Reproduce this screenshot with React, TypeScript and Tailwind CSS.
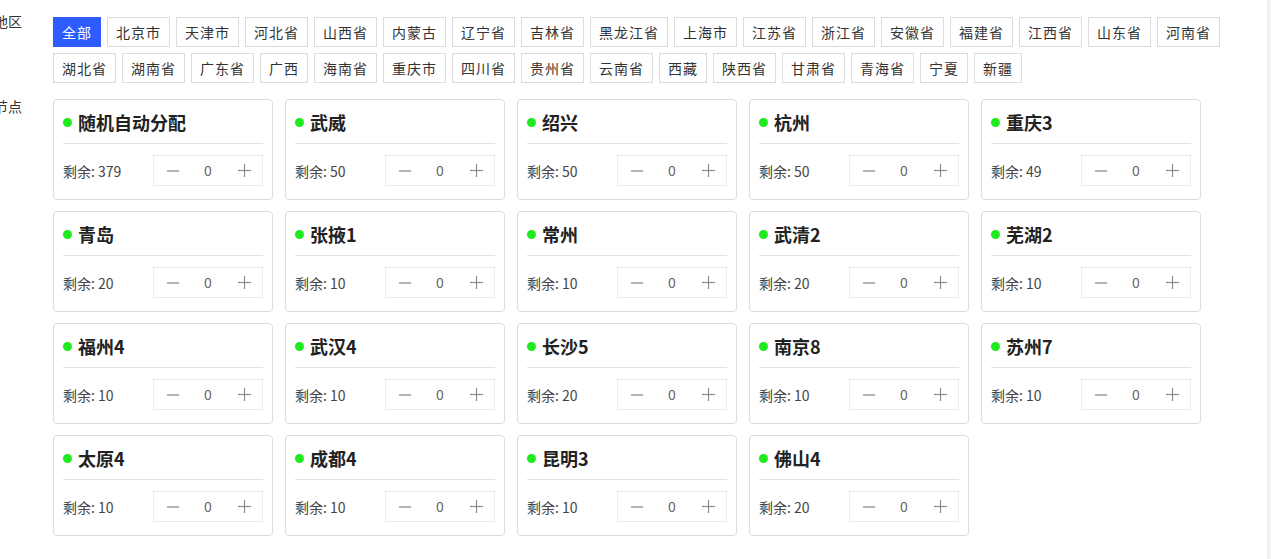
import React from 'react';

const regions = [
  '全部', '北京市', '天津市', '河北省', '山西省', '内蒙古', '辽宁省', '吉林省', '黑龙江省',
  '上海市', '江苏省', '浙江省', '安徽省', '福建省', '江西省', '山东省', '河南省',
  '湖北省', '湖南省', '广东省', '广西', '海南省', '重庆市', '四川省', '贵州省', '云南省',
  '西藏', '陕西省', '甘肃省', '青海省', '宁夏', '新疆',
];

const nodes: { name: string; left: number }[] = [
  { name: '随机自动分配', left: 379 },
  { name: '武威', left: 50 },
  { name: '绍兴', left: 50 },
  { name: '杭州', left: 50 },
  { name: '重庆3', left: 49 },
  { name: '青岛', left: 20 },
  { name: '张掖1', left: 10 },
  { name: '常州', left: 10 },
  { name: '武清2', left: 20 },
  { name: '芜湖2', left: 10 },
  { name: '福州4', left: 10 },
  { name: '武汉4', left: 10 },
  { name: '长沙5', left: 20 },
  { name: '南京8', left: 10 },
  { name: '苏州7', left: 10 },
  { name: '太原4', left: 10 },
  { name: '成都4', left: 10 },
  { name: '昆明3', left: 10 },
  { name: '佛山4', left: 20 },
];

function MinusIcon() {
  return (
    <svg width="12" height="12" viewBox="0 0 12 12">
      <line x1="0" y1="6" x2="12" y2="6" stroke="#8a8a8a" strokeWidth="1.3" />
    </svg>
  );
}

function PlusIcon() {
  return (
    <svg width="13" height="13" viewBox="0 0 13 13">
      <line x1="0" y1="6.5" x2="13" y2="6.5" stroke="#8a8a8a" strokeWidth="1.2" />
      <line x1="6.5" y1="0" x2="6.5" y2="13" stroke="#8a8a8a" strokeWidth="1.2" />
    </svg>
  );
}

function NodeCard({ name, left }: { name: string; left: number }) {
  return (
    <div className="w-[220px] rounded-[4px] border border-[#dcdcdc] bg-white px-[9px] pb-[13px]">
      {/* Title */}
      <div className="flex h-[44px] items-center border-b border-[#e2e2e2] pt-[1px]">
        <span className="h-[9px] w-[9px] rounded-full bg-[#1ee81e]" />
        <span className="ml-[6px] text-[18px] font-bold leading-[24px] text-[#222]">{name}</span>
      </div>
      {/* Stock + stepper */}
      <div className="mt-[11px] flex items-center justify-between">
        <span className="pt-[2px] text-[14px] text-[#444]">剩余: {left}</span>
        <div className="flex h-[31px] w-[110px] items-center border border-[#ebebeb]">
          <button className="flex h-full w-[36px] items-center justify-center pl-[1px]">
            <MinusIcon />
          </button>
          <span className="flex-1 text-center text-[14px] text-[#666]">0</span>
          <button className="flex h-full w-[36px] items-center justify-center">
            <PlusIcon />
          </button>
        </div>
      </div>
    </div>
  );
}

export default function App() {
  return (
    <div
      className="flex h-screen w-full overflow-hidden bg-white text-[#333]"
      style={{ fontFamily: '"Noto Sans CJK SC", "Noto Sans", sans-serif' }}
    >
      <div className="flex-1">
        <div className="-ml-[6px]">
          {/* Region filter */}
          <div className="flex items-start">
            <div className="w-[59px] shrink-0 pt-[11px] text-[14px] leading-[20px]">地区</div>
            <div className="flex flex-wrap gap-[6px] pt-[17px]">
              {regions.map((r, i) => (
                <button
                  key={r}
                  className={
                    i === 0
                      ? 'h-[30px] border border-[#2f5cff] bg-[#2f5cff] px-2 text-[14px] tracking-[1px] text-white'
                      : 'h-[30px] border border-[#dcdcdc] bg-white px-2 text-[14px] tracking-[1px] text-[#333]'
                  }
                >
                  {r}
                </button>
              ))}
            </div>
          </div>

          {/* Nodes */}
          <div className="mt-[16px] flex items-start">
            <div className="-mt-[3px] w-[59px] shrink-0 text-[14px] leading-[20px]">节点</div>
            <div className="grid grid-cols-[repeat(5,220px)] gap-x-[12px] gap-y-[11px]">
              {nodes.map((n) => (
                <NodeCard key={n.name} name={n.name} left={n.left} />
              ))}
            </div>
          </div>
        </div>
      </div>
      {/* scrollbar track */}
      <div className="w-[4px] shrink-0 bg-[#f1f1f4]" />
    </div>
  );
}
